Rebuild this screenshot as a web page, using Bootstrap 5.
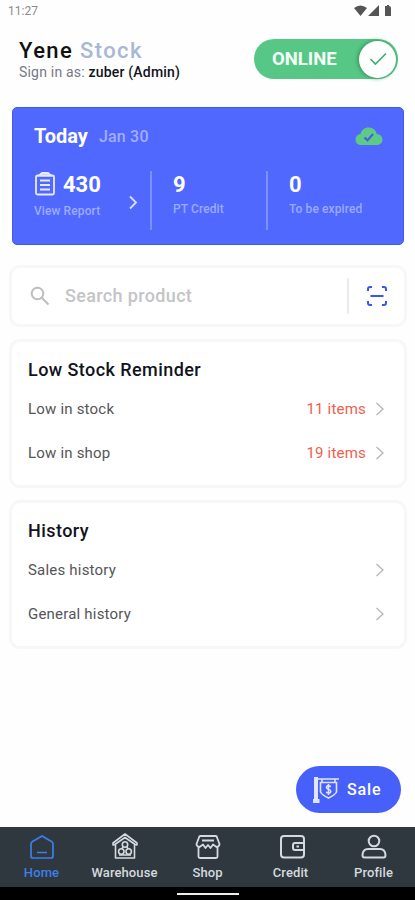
<!DOCTYPE html>
<html lang="en">
<head>
<meta charset="utf-8">
<meta name="viewport" content="width=device-width, initial-scale=1">
<title>Yene Stock</title>
<link href="https://cdn.jsdelivr.net/npm/bootstrap@5.3.0/dist/css/bootstrap.min.css" rel="stylesheet">
<style>
body{font-family:Roboto,"Liberation Sans",sans-serif;background:#fefefe;color:#111320;line-height:1}
svg{display:block;flex:none;fill:none}
.screen{height:900px;overflow:hidden}
.status{height:24px;padding:0 22px 2px 8px;font-size:12px;color:#8b8b8b}
.topbar{height:83px;padding:14px 17px 0 19px}
.brand{font-size:22px;line-height:26px;font-weight:500;letter-spacing:1.4px;color:#111}
.brand span{color:#a9b7d6}
.signed{font-size:14px;line-height:16px;color:#777886;letter-spacing:.2px}
.signed b{font-weight:500;color:#111320}
.online{width:144px;height:40px;margin-top:1px;padding:0 2px 0 18px;background:#57c785;color:#f4fff8;font-size:18.5px;font-weight:700}
.knob{width:37px;height:37px;box-shadow:-1px 0 4px #2c8a5a}
.today{margin:0 11px 0 12px;height:138px;border-radius:5px;background:#5068fe;border:1px solid #435af2;padding:15px 20px 0 21px;color:#fff}
.today-title{font-size:20px;line-height:26px;font-weight:700}
.today-date{font-size:16px;font-weight:500;line-height:26px;color:#a1aeff;margin-left:11px;padding-top:1px;letter-spacing:.2px}
.stats{height:59px;margin-top:21px}
.stat{border-left:2px solid #7f91ff;padding-left:21px;width:116px}
.stat.first-stat{border:0;padding-left:0}
.num{font-size:22px;line-height:26px;font-weight:700}
.cap{font-size:12px;line-height:14px;font-weight:500;color:#9caaff;white-space:nowrap;letter-spacing:.1px}
.stat .num{margin-top:1px}
.count{margin-left:7px}
.report{margin-top:6px}
.go{margin-right:10px}
.panel{margin:0 8px 0 9px;border:3px solid #f7f7f7;border-radius:11px;background:#fff}
.search{height:62px;margin-top:20px;padding:0 16px 0 18px}
.search-text{font-size:18px;font-weight:500;color:#c3c4c7;letter-spacing:.35px;margin-left:15px}
.split{width:2px;height:36px;background:#e9ecec;margin-right:17px}
.list-panel{height:149px;margin-top:12px;padding:15px 18px 0 16px}
.list-panel h2{font-size:18px;line-height:26px;font-weight:500;margin:0 0 4px;letter-spacing:.43px}
.line{height:44.5px;font-size:15px;color:#555558;letter-spacing:.2px}
.line em{font-style:normal;color:#ee604d}
.sale{width:105px;height:47px;background:#4860fa;color:#fff;font-size:16px;font-weight:500;letter-spacing:.9px;padding-left:16px;margin:0 14px 14px auto}
.tabs{height:60px;background:#30383f;color:#d5dade;font-size:13px;font-weight:500}
.tab{padding-top:5px}
.tab.on{color:#3b7fe8}
.tab span{line-height:16px;margin-top:3px;letter-spacing:.1px}
.gesture{height:13px;background:#000}
.gesture i{width:62px;height:2px;background:#eee}
</style>
</head>
<body>
<div class="screen d-flex flex-column">
  <div class="status d-flex align-items-center">
    <span class="me-auto">11:27</span>
    <svg width="39" height="12" viewBox="0 0 39 12"><path fill="#555" d="M0 3Q6.500-2 13 3L6.500 11ZM25 0V11H14ZM31 1H33V0H35V1Q37 1 37 3V11H31Z"/></svg>
  </div>
  <header class="topbar d-flex justify-content-between align-items-start">
    <div>
      <div class="brand">Yene <span>Stock</span></div>
      <div class="signed">Sign in as: <b>zuber (Admin)</b></div>
    </div>
    <div class="online rounded-pill d-flex align-items-center justify-content-between">
      ONLINE
      <span class="knob rounded-circle bg-white d-flex align-items-center justify-content-center">
        <svg width="18" height="14" viewBox="0 0 18 14" stroke="#3fae76" stroke-width="1.700"><path d="M1.500 7L6.500 12L17 1.500"/></svg>
      </span>
    </div>
  </header>

  <section class="today">
    <div class="d-flex">
      <span class="today-title">Today</span><span class="today-date">Jan 30</span>
      <svg class="ms-auto mt-1" width="28" height="18" viewBox="0 0 28 18"><path fill="#5dcb86" d="M6 18C2.500 18 .5 15.500 .5 12.500C.5 9.500 2.500 7.300 5.500 7C6.500 3 9.500.5 13.500.5C17.500.5 21 3 21.700 7C25 7.300 27.500 9.500 27.500 12.700C27.500 15.500 25 18 22 18Z"/><path d="M9.500 10.500L12.500 13.300L18 7" stroke="#435af2" stroke-width="2"/></svg>
    </div>
    <div class="stats d-flex">
      <div class="stat first-stat d-flex">
        <div>
          <div class="d-flex align-items-center">
            <svg width="22" height="26" viewBox="0 0 22 26" stroke="#e6eaff" stroke-width="1.800"><rect x="2" y="3.500" width="18" height="19" rx="1.500"/><path fill="#b9c4ff" d="M5 3.500L8 1H14L17 3.500Z"/><path d="M6 8.500H16M6 13H16M6 17.500H16"/></svg>
            <span class="num count">430</span>
          </div>
          <div class="cap report">View Report</div>
        </div>
        <svg class="go ms-auto mt-4" width="14" height="15" viewBox="0 0 14 15" stroke="#d9dfff" stroke-width="1.800"><path d="M4 1.500L10 7.500L4 13.500"/></svg>
      </div>
      <div class="stat"><div class="num">9</div><div class="cap mt-1">PT Credit</div></div>
      <div class="stat"><div class="num">0</div><div class="cap mt-1">To be expired</div></div>
    </div>
  </section>

  <div class="panel search d-flex align-items-center">
    <svg width="20" height="20" viewBox="0 0 20 20" stroke="#bcbdbf" stroke-width="2"><circle cx="7.500" cy="7.500" r="5.800"/><path d="M11.800 11.800L18.500 18.500"/></svg>
    <span class="search-text me-auto">Search product</span>
    <span class="split"></span>
    <svg width="22" height="22" viewBox="0 0 22 22" stroke="#3d55ee" stroke-width="2"><path d="M2 6V4Q2 2 4 2H6M16 2H18Q20 2 20 4V6M20 16V18Q20 20 18 20H16M6 20H4Q2 20 2 18V16M4.500 11H17.500"/></svg>
  </div>

  <section class="panel list-panel">
    <h2>Low Stock Reminder</h2>
    <div class="line d-flex align-items-center"><span class="me-auto">Low in stock</span><em>11 items</em><svg class="ms-2" width="12" height="15" viewBox="0 0 12 15" stroke="#b5b5b7" stroke-width="1.300"><path d="M2.500 1L9 7L2.500 13"/></svg></div>
    <div class="line d-flex align-items-center"><span class="me-auto">Low in shop</span><em>19 items</em><svg class="ms-2" width="12" height="15" viewBox="0 0 12 15" stroke="#b5b5b7" stroke-width="1.300"><path d="M2.500 1L9 7L2.500 13"/></svg></div>
  </section>

  <section class="panel list-panel">
    <h2>History</h2>
    <div class="line d-flex align-items-center"><span class="me-auto">Sales history</span><svg width="12" height="15" viewBox="0 0 12 15" stroke="#b5b5b7" stroke-width="1.300"><path d="M2.500 1L9 7L2.500 13"/></svg></div>
    <div class="line d-flex align-items-center"><span class="me-auto">General history</span><svg width="12" height="15" viewBox="0 0 12 15" stroke="#b5b5b7" stroke-width="1.300"><path d="M2.500 1L9 7L2.500 13"/></svg></div>
  </section>

  <div class="mt-auto">
    <div class="sale rounded-pill d-flex align-items-center">
      <svg width="27" height="28" viewBox="0 0 27 28" stroke="#dfe5ff" stroke-width="1.600"><path fill="#dfe5ff" stroke="none" d="M2 1H6V23H7.500V27H1V23H2Z"/><path d="M6 3H27M10 3V6M23 3V6M8.500 6.500H24.500V16Q23 19 16.500 22Q10 19 8.500 16Z"/><path d="M19 10.500Q14.500 8.500 14.500 11.500C14.500 14 18.800 12.500 18.800 15.500Q18.500 18 14 16.300M16.500 8V19"/></svg>
      <span class="ms-2">Sale</span>
    </div>
    <nav class="tabs d-flex">
      <div class="tab on col d-flex flex-column align-items-center">
        <svg width="28" height="30" viewBox="0 0 28 30" stroke="currentColor" stroke-width="1.700" stroke-linejoin="round"><path d="M3 12Q3 10.500 4.500 9.500L14 4L23.500 9.500Q25 10.500 25 12V24Q25 26 23 26H5Q3 26 3 24ZM9 20.500H19"/></svg>
        <span>Home</span>
      </div>
      <div class="tab col d-flex flex-column align-items-center">
        <svg width="28" height="30" viewBox="0 0 28 30" stroke="currentColor" stroke-width="1.600" stroke-linejoin="round"><path d="M5 12L2 13V11L14 2L26 11V13L23 12M4.500 12V26H23.500V12L14 5.500Z"/><circle cx="14" cy="12.500" r="2.700"/><circle cx="10.300" cy="19.500" r="2.700"/><circle cx="17.700" cy="19.500" r="2.700"/><path d="M12 14.500L11 17M16 14.500L17 17M8 23H20"/></svg>
        <span>Warehouse</span>
      </div>
      <div class="tab col d-flex flex-column align-items-center">
        <svg width="28" height="30" viewBox="0 0 28 30" stroke="currentColor" stroke-width="1.800" stroke-linejoin="round"><path d="M5 5.500Q5 4 6.500 4H21.500Q23 4 23 5.500L25.500 12Q25.500 14.500 22.500 15L19 12.500L16.500 16L14 13L11.500 16L9 12.500L5.500 15Q2.500 14.500 2.500 12ZM4.500 14.500V24.500Q4.500 26 6 26H22Q23.500 26 23.500 24.500V14.500M8 8.500H20"/></svg>
        <span>Shop</span>
      </div>
      <div class="tab col d-flex flex-column align-items-center">
        <svg width="28" height="30" viewBox="0 0 28 30" stroke="currentColor" stroke-width="2"><rect x="4" y="4" width="23" height="21.500" rx="3"/><path d="M27 11H18Q16 11 16 13V16Q16 18 18 18H27M19.500 14.500H22"/></svg>
        <span>Credit</span>
      </div>
      <div class="tab col d-flex flex-column align-items-center">
        <svg width="28" height="30" viewBox="0 0 28 30" stroke="currentColor" stroke-width="2"><circle cx="14" cy="9" r="5.300"/><path d="M8 17H20Q25 17 25.500 23Q25.500 25.500 23.500 25.500H4.500Q2.500 25.500 2.500 23Q3 17 8 17Z"/></svg>
        <span>Profile</span>
      </div>
    </nav>
    <div class="gesture d-flex justify-content-center align-items-center"><i></i></div>
  </div>
</div>
<script src="https://cdn.jsdelivr.net/npm/bootstrap@5.3.0/dist/js/bootstrap.bundle.min.js"></script>
</body>
</html>
